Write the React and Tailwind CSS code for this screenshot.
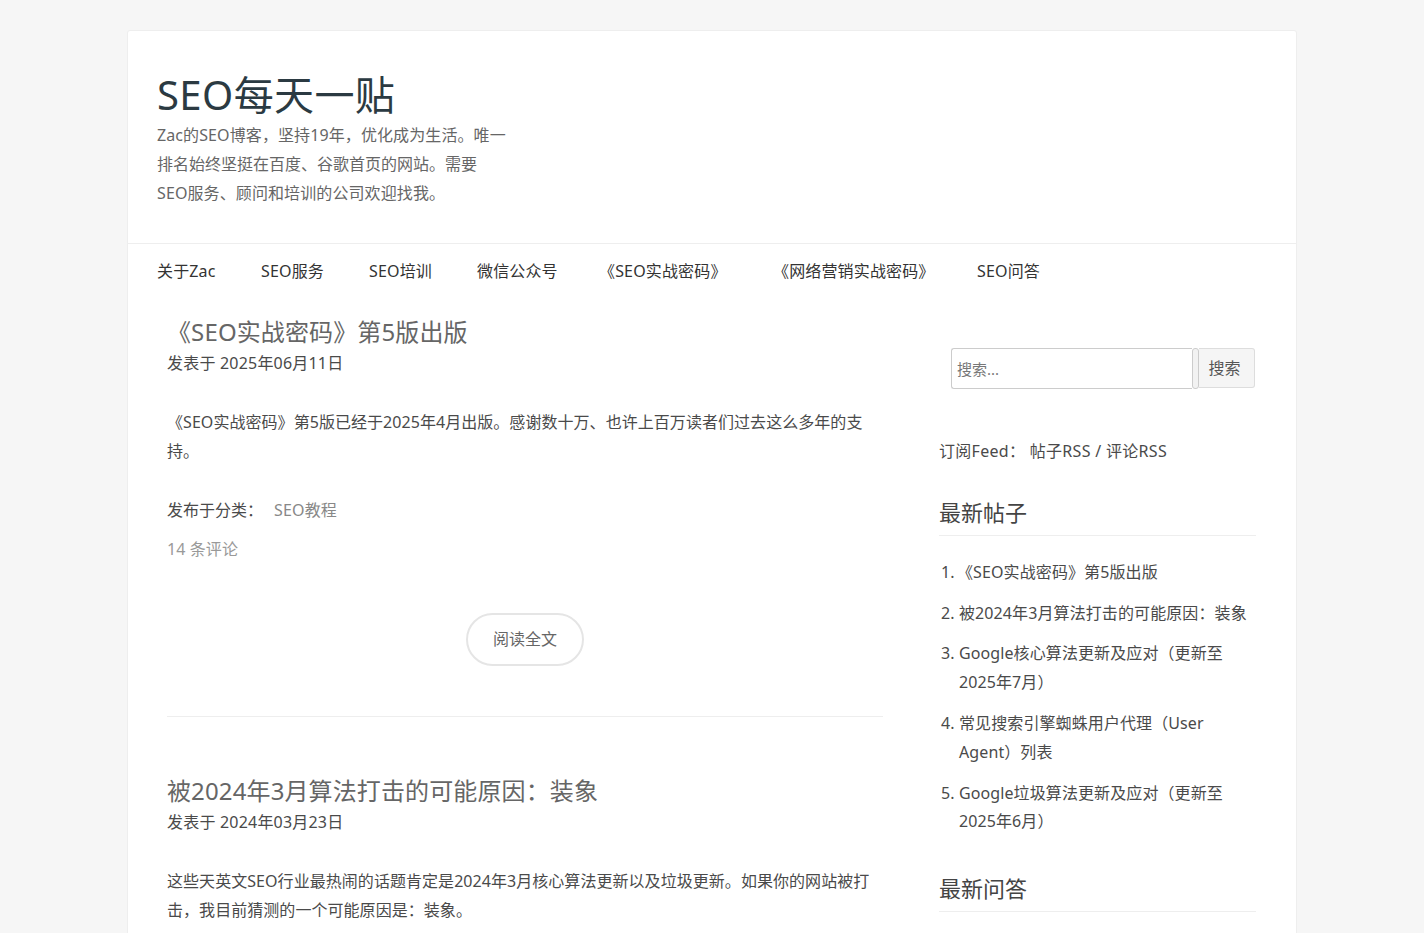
import React from 'react';

const fontStack = "font-['Noto_Sans','Noto_Sans_CJK_SC',sans-serif] font-normal";

const navItems = [
  { label: '关于Zac', cls: 'w-[104px]' },
  { label: 'SEO服务', cls: 'w-[108px]' },
  { label: 'SEO培训', cls: 'w-[108px]' },
  { label: '微信公众号', cls: 'w-[122px]' },
  { label: '《SEO实战密码》', cls: 'w-[174px]' },
  { label: '《网络营销实战密码》', cls: 'w-[204px]' },
  { label: 'SEO问答', cls: '' },
];

const latestPosts = [
  { lines: ['《SEO实战密码》第5版出版'], cls: '-ml-[2px]' },
  { lines: ['被2024年3月算法打击的可能原因：装象'] },
  { lines: ['Google核心算法更新及应对（更新至', '2025年7月）'] },
  { lines: ['常见搜索引擎蜘蛛用户代理（User', 'Agent）列表'] },
  { lines: ['Google垃圾算法更新及应对（更新至', '2025年6月）'] },
];

const Post = ({ title, date, lines, children }) => (
  <article>
    <h2 className="text-[24px] leading-[32px] text-[#666] tracking-[0.12px]">{title}</h2>
    <p className="text-[16px] leading-[28.8px] text-[#4a4a4a] mt-[1px] tracking-[0.2px]">发表于 {date}</p>
    <p className="text-[16px] leading-[28.8px] text-[#4a4a4a] mt-[30px] tracking-[0.05px]">
      {lines.map((l) => (
        <span key={l} className="block whitespace-nowrap">{l}</span>
      ))}
    </p>
    {children}
  </article>
);

export default function App() {
  return (
    <div className={`${fontStack} h-[933px] overflow-hidden bg-[#f6f6f6] pt-[30px]`}>
      <div className="ml-[127px] w-[1170px] h-[1000px] bg-white border border-[#eeeeee] rounded-t-[3px]">
        <header className="h-[212px] pl-[29px] pt-[36px]">
          <h1 className="text-[40px] leading-[56px] text-[#2b3a42] tracking-[0.4px]">SEO每天一贴</h1>
          <p className="text-[16px] leading-[28.8px] text-[#666] -mt-[2px] tracking-[0.1px]">
            <span className="block">Zac的SEO博客，坚持19年，优化成为生活。唯一</span>
            <span className="block tracking-normal">排名始终坚挺在百度、谷歌首页的网站。需要</span>
            <span className="block">SEO服务、顾问和培训的公司欢迎找我。</span>
          </p>
        </header>

        <nav className="border-t border-[#eeeeee] h-[55px] pl-[29px] flex items-center text-[16px] text-[#333] tracking-[0.15px]">
          {navItems.map((item) => (
            <a key={item.label} className={`${item.cls} block whitespace-nowrap`}>{item.label}</a>
          ))}
        </nav>

        <div className="flex">
          <main className="w-[716px] ml-[39px] pt-[18px]">
            <Post
              title="《SEO实战密码》第5版出版"
              date="2025年06月11日"
              lines={['《SEO实战密码》第5版已经于2025年4月出版。感谢数十万、也许上百万读者们过去这么多年的支', '持。']}
            >
              <p className="text-[16px] leading-[28.8px] text-[#4a4a4a] mt-[31px]">
                发布于分类：<span className="ml-[11px] text-[#888] tracking-[0.15px]">SEO教程</span>
              </p>
              <p className="text-[16px] leading-[28.8px] text-[#999] mt-[10px] tracking-[0.1px]">14 条评论</p>
              <div className="flex justify-center mt-[49px]">
                <a className="w-[118px] h-[53px] flex items-center justify-center rounded-full border-2 border-[#e5e5e5] text-[16px] text-[#666]">
                  阅读全文
                </a>
              </div>
              <hr className="mt-[50px] mb-[58px] border-[#eeeeee]" />
            </Post>
            <Post
              title="被2024年3月算法打击的可能原因：装象"
              date="2024年03月23日"
              lines={['这些天英文SEO行业最热闹的话题肯定是2024年3月核心算法更新以及垃圾更新。如果你的网站被打', '击，我目前猜测的一个可能原因是：装象。']}
            />
          </main>

          <aside className="w-[317px] ml-[56px] pt-[50px]">
            <form className="flex ml-[12px] w-[304px] h-[41px]">
              <input
                placeholder="搜索..."
                className="w-[241px] h-[41px] border border-r-0 border-[#cccccc] rounded-l-[3px] pl-[5px] text-[15px] placeholder:text-[#777] outline-none"
              />
              <span className="w-[7px] h-[41px] border border-[#cccccc] rounded-[3px] bg-[#f2f2f2]" />
              <button type="button" className="w-[56px] h-[40px] border border-l-0 border-[#dddddd] rounded-r-[3px] bg-[#f5f5f5] text-[16px] text-[#555] pr-[4px]">
                搜索
              </button>
            </form>

            <p className="mt-[48px] text-[16px] leading-[28.8px] text-[#4a4a4a] tracking-[0.3px]">订阅Feed： 帖子RSS / 评论RSS</p>

            <h3 className="mt-[30px] text-[22px] leading-[32px] text-[#444] pb-[7px] border-b border-[#eeeeee]">最新帖子</h3>
            <ol className="mt-[22px] text-[16px] leading-[28.8px] text-[#4a4a4a] flex flex-col gap-[12px]">
              {latestPosts.map((post, i) => (
                <li key={post.lines[0]} className="flex">
                  <span className="w-[20px] pl-[2px] shrink-0">{i + 1}.</span>
                  <span className={`${post.cls || ''} tracking-[0.1px]`}>
                    {post.lines.map((l) => (
                      <span key={l} className="block whitespace-nowrap">{l}</span>
                    ))}
                  </span>
                </li>
              ))}
            </ol>

            <h3 className="mt-[36px] text-[22px] leading-[32px] text-[#444] pb-[7px] border-b border-[#eeeeee]">最新问答</h3>
          </aside>
        </div>
      </div>
    </div>
  );
}
